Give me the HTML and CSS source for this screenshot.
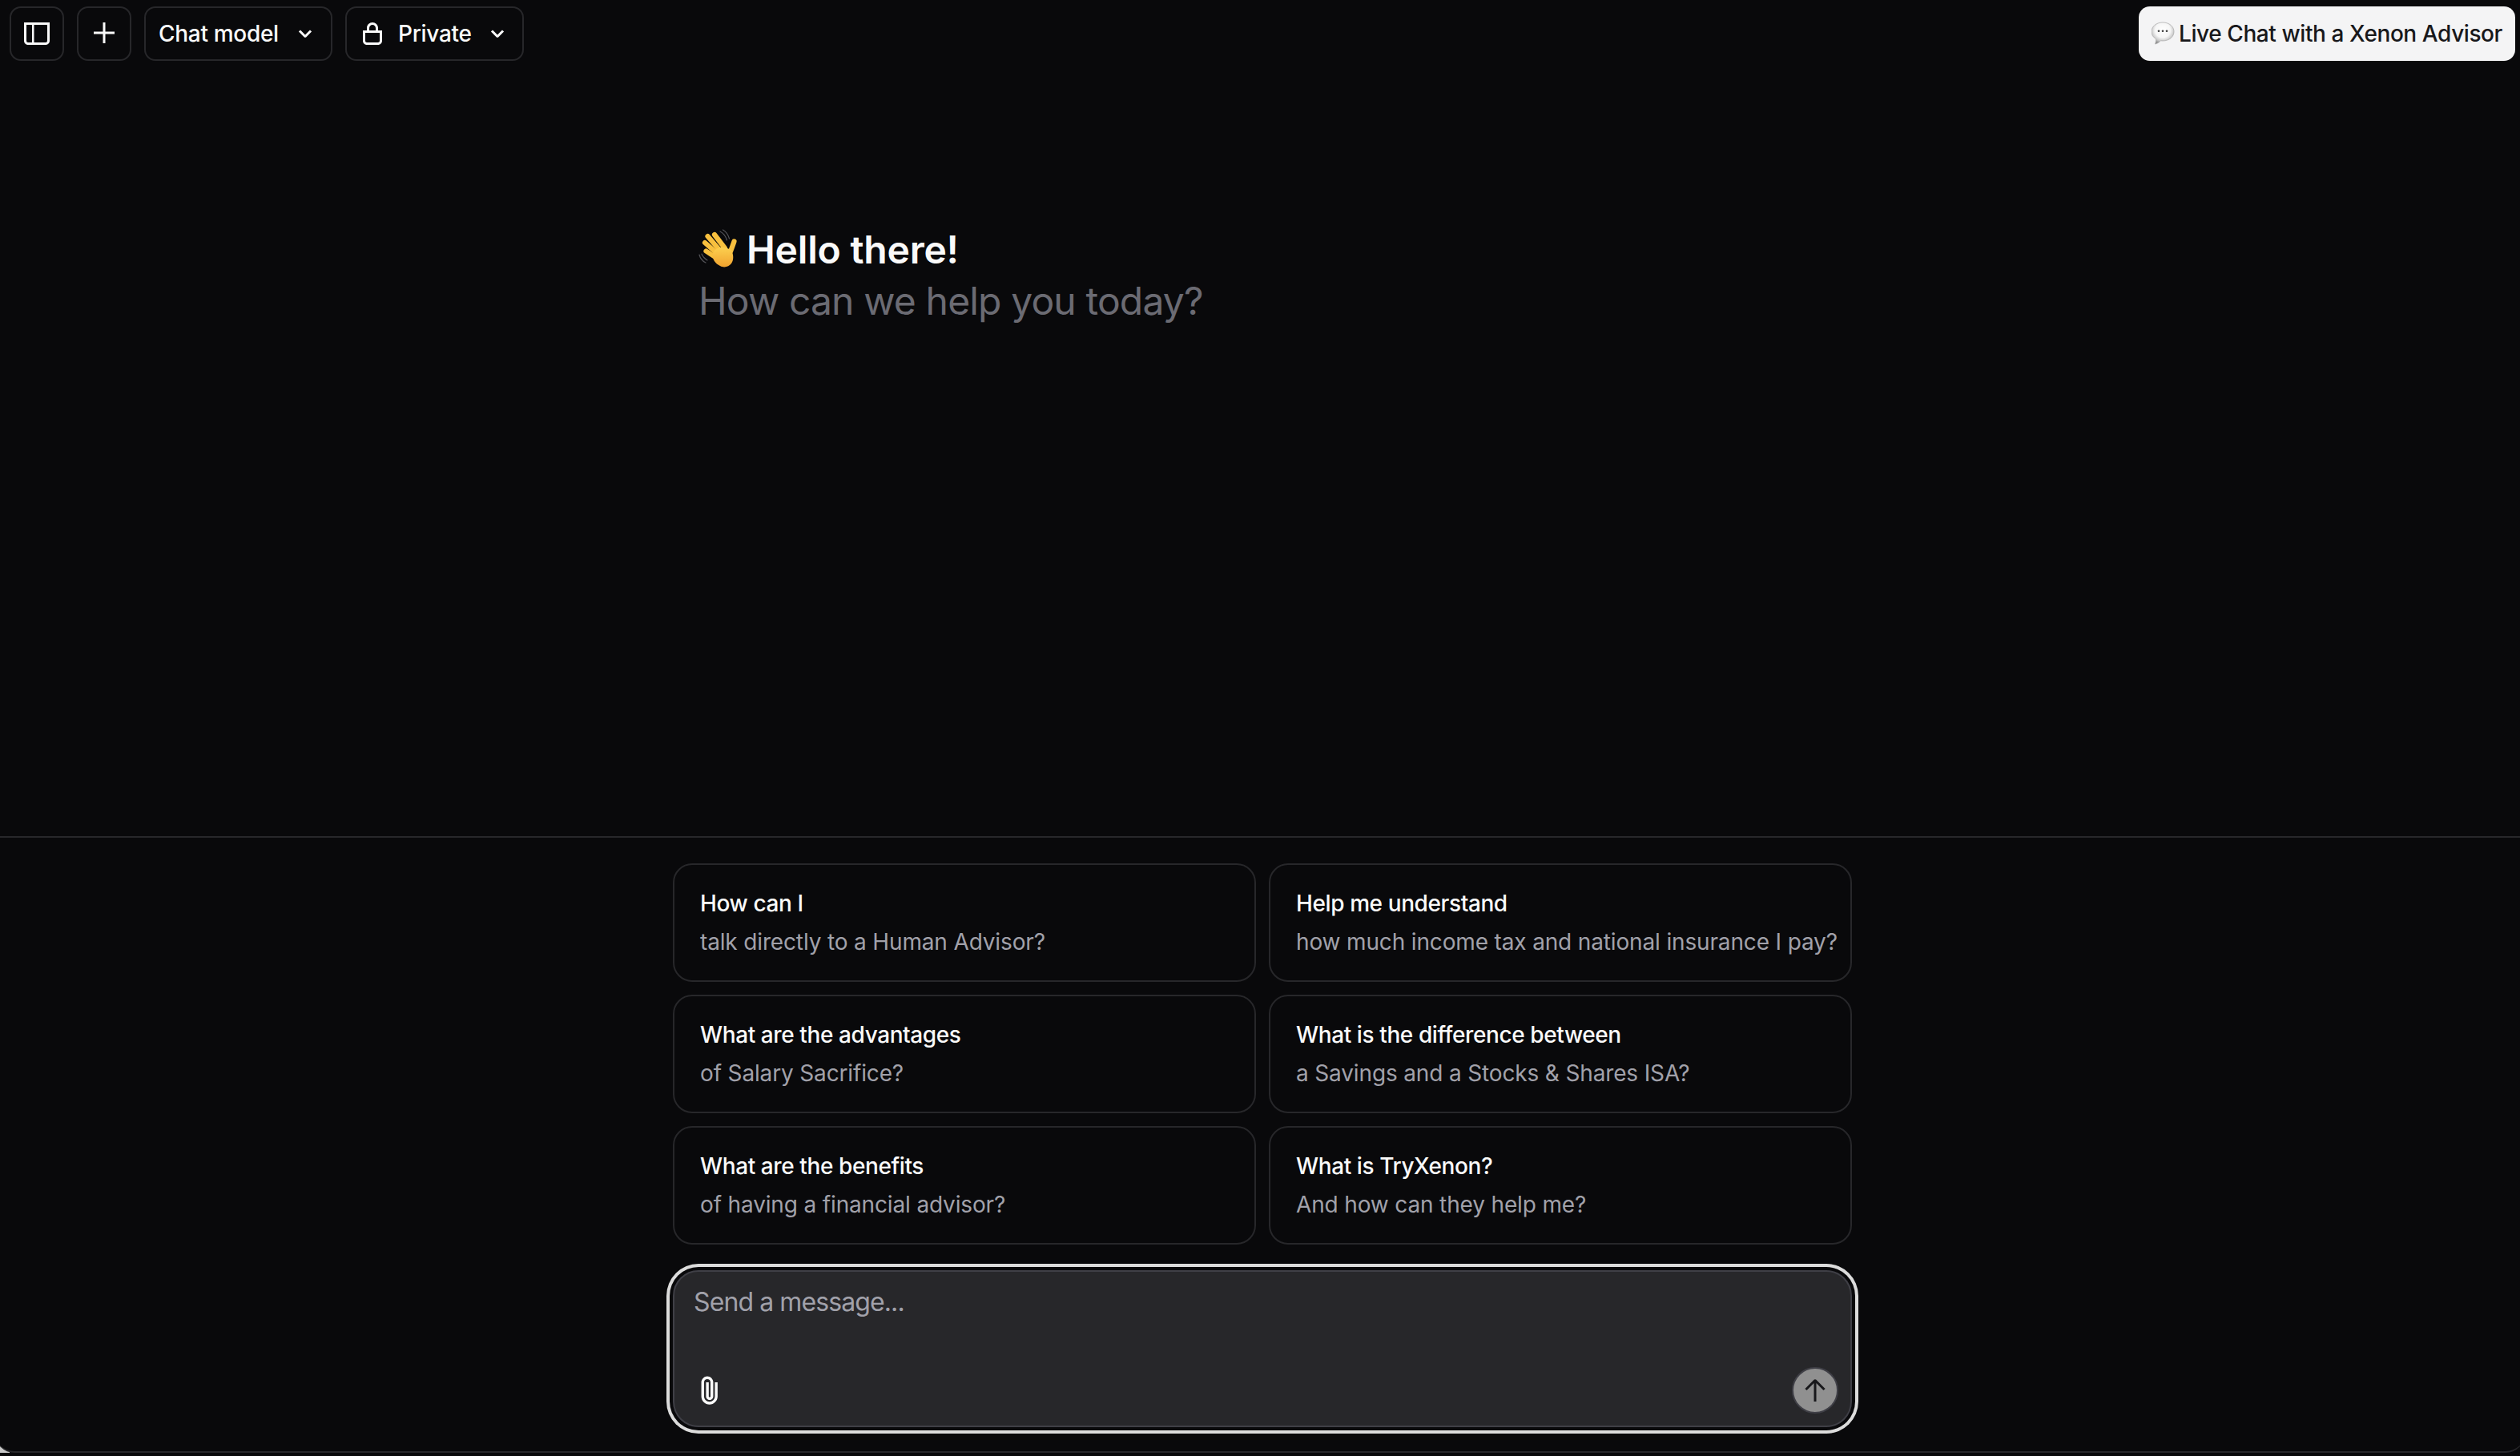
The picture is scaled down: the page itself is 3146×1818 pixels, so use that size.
FILE: index.html
```html
<!DOCTYPE html>
<html lang="en">
<head>
<meta charset="utf-8">
<title>Chat</title>
<link rel="stylesheet" href="styles.css">
</head>
<body>
<div class="corner"></div>
<div class="frame">
  <header class="topbar">
    <button class="btn btn-icon" type="button" aria-label="Toggle sidebar">
      <svg class="ico" viewBox="0 0 16 16"><path fill-rule="evenodd" clip-rule="evenodd" d="M6.245 2.5H14.5V12.5C14.5 13.0523 14.0523 13.5 13.5 13.5H6.245V2.5ZM4.995 2.5H1.5V12.5C1.5 13.0523 1.94772 13.5 2.5 13.5H4.995V2.5ZM0 1H1.5H14.5H16V2.5V12.5C16 13.8807 14.8807 15 13.5 15H2.5C1.11929 15 0 13.8807 0 12.5V2.5V1Z"/></svg>
    </button>
    <button class="btn btn-icon" type="button" aria-label="New chat">
      <svg class="ico" viewBox="0 0 16 16"><path fill-rule="evenodd" clip-rule="evenodd" d="M8.75 1.75V1H7.25V1.75V6.75H2.25H1.5V8.25H2.25H7.25V13.25V14H8.75V13.25V8.25H13.75H14.5V6.75H13.75H8.75V1.75Z"/></svg>
    </button>
    <button class="btn btn-model" type="button">
      <span>Chat model</span>
      <svg class="ico" viewBox="0 0 16 16"><path fill-rule="evenodd" clip-rule="evenodd" d="M12.0607 6.74999L11.5303 7.28032L8.7071 10.1035C8.31657 10.4941 7.68341 10.4941 7.29288 10.1035L4.46966 7.28032L3.93933 6.74999L4.99999 5.68933L5.53032 6.21966L7.99999 8.68933L10.4697 6.21966L11 5.68933L12.0607 6.74999Z"/></svg>
    </button>
    <button class="btn btn-private" type="button">
      <svg class="ico" viewBox="0 0 16 16"><path fill-rule="evenodd" clip-rule="evenodd" d="M10 4.5V6H6V4.5C6 3.39543 6.89543 2.5 8 2.5C9.10457 2.5 10 3.39543 10 4.5ZM4.5 6V4.5C4.5 2.567 6.067 1 8 1C9.933 1 11.5 2.567 11.5 4.5V6H12.5H14V7.5V12.5C14 13.8807 12.8807 15 11.5 15H4.5C3.11929 15 2 13.8807 2 12.5V7.5V6H3.5H4.5ZM11.5 7.5H10H6H4.5H3.5V12.5C3.5 13.0523 3.94772 13.5 4.5 13.5H11.5C12.0523 13.5 12.5 13.0523 12.5 12.5V7.5H11.5Z"/></svg>
      <span>Private</span>
      <svg class="ico" viewBox="0 0 16 16"><path fill-rule="evenodd" clip-rule="evenodd" d="M12.0607 6.74999L11.5303 7.28032L8.7071 10.1035C8.31657 10.4941 7.68341 10.4941 7.29288 10.1035L4.46966 7.28032L3.93933 6.74999L4.99999 5.68933L5.53032 6.21966L7.99999 8.68933L10.4697 6.21966L11 5.68933L12.0607 6.74999Z"/></svg>
    </button>
    <button class="btn-live" type="button">
      <svg class="bubble" viewBox="10 2 34 40">
        <defs><radialGradient id="bg" cx="50%" cy="36%" r="62%"><stop offset="0" stop-color="#ffffff"/><stop offset=".55" stop-color="#f6f6f6"/><stop offset=".82" stop-color="#c8c8c8"/><stop offset="1" stop-color="#8e8e8e"/></radialGradient></defs>
        <path fill="url(#bg)" stroke="#a8a8a8" stroke-width=".7" d="M24 8C16 8 10 13 10 19.500C10 23.500 12 26.500 15.500 28.500C15.800 30.500 15.200 33 14.500 35C17.500 34.500 20 32.500 21.500 30.800C22.300 30.900 23.200 31 24 31C32 31 38 26 38 19.500C38 13 32 8 24 8Z"/>
        <circle cx="19" cy="18.800" r="1.300" fill="#3a3a3a"/><circle cx="24" cy="18.800" r="1.300" fill="#3a3a3a"/><circle cx="29" cy="18.800" r="1.300" fill="#3a3a3a"/>
      </svg>
      <span>Live Chat with a Xenon Advisor</span>
    </button>
  </header>

  <main class="messages">
    <div class="greeting">
      <div class="hello">
        <svg class="wave" viewBox="6 0 60 64">
          <defs><linearGradient id="hand" x1="0" y1="0" x2="0" y2="1"><stop offset="0" stop-color="#fcd050"/><stop offset="1" stop-color="#f0a22e"/></linearGradient></defs>
          <g fill="none" stroke="#55555a" stroke-width="1.200" stroke-linecap="round"><path d="M33 9C37 11 40 15 41.500 20"/><path d="M36.500 7C40 9 43 13 44.500 18"/><path d="M7 38C8 42 11 46 15 48"/><path d="M10 37C11 40 14 43 17 45"/></g>
          <g fill="none" stroke="#f8c03e" stroke-width="6.200" stroke-linecap="round"><path d="M26 13L39 30"/><path d="M17.500 15L33 33"/><path d="M14 23L30 37"/><path d="M15.500 33.500L30 43"/><path d="M50.500 21.500C49 26 47.500 30 46 34"/></g>
          <path fill="url(#hand)" d="M30 30C36 27 42 30 47 32C50 38 50 45 47 49C44 53 38 55 33 52C27 49 23 44 24 37C25 33 27 31 30 30Z"/>
        </svg>
        <span>Hello there!</span>
      </div>
      <div class="subhello">How can we help you today?</div>
    </div>
  </main>

  <footer class="composer">
    <div class="suggestions">
      <button class="card" type="button"><span class="card-title">How can I</span><span class="card-sub">talk directly to a Human Advisor?</span></button>
      <button class="card" type="button"><span class="card-title">Help me understand</span><span class="card-sub">how much income tax and national insurance I pay?</span></button>
      <button class="card" type="button"><span class="card-title">What are the advantages</span><span class="card-sub">of Salary Sacrifice?</span></button>
      <button class="card" type="button"><span class="card-title">What is the difference between</span><span class="card-sub">a Savings and a Stocks &amp; Shares ISA?</span></button>
      <button class="card" type="button"><span class="card-title">What are the benefits</span><span class="card-sub">of having a financial advisor?</span></button>
      <button class="card" type="button"><span class="card-title">What is TryXenon?</span><span class="card-sub">And how can they help me?</span></button>
    </div>
    <div class="input-box">
      <textarea class="input" placeholder="Send a message..." rows="2"></textarea>
      <button class="attach" type="button" aria-label="Attach file">
        <svg class="clip" viewBox="0 0 16 16"><path fill-rule="evenodd" clip-rule="evenodd" d="M10.8591 1.70735C10.3257 1.70735 9.81417 1.91925 9.437 2.29643L3.19455 8.53886C2.56246 9.17095 2.20735 10.0282 2.20735 10.9222C2.20735 11.8161 2.56246 12.6734 3.19455 13.3055C3.82665 13.9376 4.68395 14.2927 5.57786 14.2927C6.47178 14.2927 7.32908 13.9376 7.96117 13.3055L14.2036 7.06304L15.4107 8.27018L9.16829 14.5126C8.21602 15.4649 6.92447 16 5.57786 16C4.23126 16 2.93971 15.4649 1.98744 14.5126C1.03517 13.5603 0.5 12.2688 0.5 10.9222C0.5 9.57558 1.03517 8.28403 1.98744 7.33176L8.22987 1.08933C8.9272 0.392 9.87298 0 10.8591 0C11.8453 0 12.7911 0.392 13.4884 1.08933C14.1857 1.78666 14.5777 2.73244 14.5777 3.71859C14.5777 4.70474 14.1857 5.65052 13.4884 6.34785L7.23914 12.5903C6.8174 13.012 6.24541 13.2489 5.64896 13.2489C5.05251 13.2489 4.48052 13.012 4.05878 12.5903C3.63704 12.1685 3.40011 11.5965 3.40011 11.0001C3.40011 10.4036 3.63704 9.83163 4.05878 9.40989L10.2484 3.22033L11.4555 4.42747L5.26592 10.6171C5.16432 10.7187 5.10724 10.8564 5.10724 11.0001C5.10724 11.1438 5.16432 11.2816 5.26592 11.3832C5.36752 11.4848 5.50532 11.5418 5.64896 11.5418C5.7926 11.5418 5.9304 11.4848 6.032 11.3832L12.2812 5.14071C12.6584 4.76353 12.8703 4.25197 12.8703 3.71859C12.8703 3.18521 12.6584 2.67365 12.2812 2.29643C11.904 1.91925 11.3925 1.70735 10.8591 1.70735Z"/></svg>
      </button>
      <button class="send" type="button" aria-label="Send">
        <svg class="ico" viewBox="0 0 16 16"><path fill-rule="evenodd" clip-rule="evenodd" d="M8.70711 1.39644C8.31659 1.00592 7.68342 1.00592 7.2929 1.39644L2.21968 6.46966L1.68935 6.99999L2.75001 8.06065L3.28034 7.53032L7.25001 3.56065V14.25V15H8.75001V14.25V3.56065L12.7197 7.53032L13.25 8.06065L14.3107 6.99999L13.7803 6.46966L8.70711 1.39644Z"/></svg>
      </button>
    </div>
  </footer>
</div>
</body>
</html>
```

FILE: styles.css
```css
* { box-sizing: border-box; }

html, body {
  margin: 0;
  height: 100%;
  overflow: hidden;
  background: #09090b;
  font-family: Inter, "Liberation Sans", sans-serif;
  color: #fafafa;
}

body { position: relative; }

.corner {
  position: absolute;
  left: 0;
  bottom: 4px;
  width: 12px;
  height: 18px;
  background: #c9c9c9;
}

.frame {
  position: relative;
  margin: 0 -6px;
  padding-left: 6px;
  height: 1814px;
  display: flex;
  flex-direction: column;
  background: #09090b;
  border-bottom: 2px solid #27272a;
  border-radius: 0 0 24px 24px;
}

button {
  font-family: inherit;
  padding: 0;
  margin: 0;
  cursor: pointer;
}

.topbar {
  display: flex;
  align-items: center;
  gap: 16px;
  padding: 8px 12px 0;
}

.ico {
  width: 32px;
  height: 32px;
  fill: currentColor;
  flex: none;
}

.btn {
  height: 68px;
  display: flex;
  align-items: center;
  background: #09090b;
  color: #fafafa;
  border: 2px solid #27272a;
  border-radius: 14px;
  font-size: 28px;
  font-weight: 500;
  letter-spacing: -0.3px;
  white-space: nowrap;
}

.btn-icon {
  width: 68px;
  justify-content: center;
}

.btn-model {
  width: 235px;
  padding-left: 16px;
  gap: 17px;
}

.btn-private {
  width: 223px;
  padding-left: 16px;
  gap: 16px;
}

.btn-live {
  margin-left: auto;
  height: 68px;
  display: flex;
  align-items: center;
  background: #f4f4f5;
  color: #18181b;
  border: 0;
  border-radius: 14px;
  padding: 0 16px;
  font-size: 28px;
  font-weight: 500;
  letter-spacing: -0.42px;
  white-space: nowrap;
}

.bubble {
  width: 34px;
  height: 40px;
  flex: none;
}

.messages {
  flex: 1;
  min-height: 0;
  border-bottom: 2px solid #27272a;
}

.greeting {
  margin: 204px 0 0 872px;
}

.hello {
  display: flex;
  align-items: center;
  height: 64px;
  font-size: 48px;
  line-height: 64px;
  font-weight: 600;
  letter-spacing: -0.2px;
}

.wave {
  width: 60px;
  height: 64px;
  flex: none;
}

.subhello {
  font-size: 48px;
  line-height: 64px;
  letter-spacing: -0.85px;
  color: #6b6b73;
}

.composer {
  width: 1472px;
  margin-left: 840px;
  padding: 32px 0 30px;
  display: flex;
  flex-direction: column;
  gap: 32px;
}

.suggestions {
  display: grid;
  grid-template-columns: 1fr 1fr;
  gap: 16px;
}

.card {
  height: 148px;
  display: flex;
  flex-direction: column;
  align-items: flex-start;
  justify-content: center;
  gap: 8px;
  padding: 0 0 0 32px;
  background: #09090b;
  border: 2px solid #27272a;
  border-radius: 24px;
  font-size: 28px;
  line-height: 40px;
  white-space: nowrap;
}

.card-title {
  color: #fafafa;
  font-weight: 500;
  letter-spacing: -0.4px;
}

.card-sub {
  color: #a1a1aa;
  font-weight: 400;
  letter-spacing: -0.15px;
}

.input-box {
  position: relative;
  height: 196px;
  background: #27272a;
  border: 2px solid #3f3f46;
  border-radius: 32px;
  box-shadow: 0 0 0 4px #09090b, 0 0 0 8px #dcdcdc;
}

.input {
  display: block;
  width: 100%;
  height: 100%;
  padding: 14px 24px;
  background: transparent;
  border: 0;
  outline: 0;
  resize: none;
  color: #fafafa;
  font-family: inherit;
  font-size: 32px;
  line-height: 48px;
  letter-spacing: -0.9px;
}

.input::placeholder {
  color: #a1a1aa;
  opacity: 1;
}

.attach {
  position: absolute;
  left: 23px;
  bottom: 20px;
  width: 40px;
  height: 48px;
  display: flex;
  align-items: center;
  justify-content: center;
  background: transparent;
  border: 0;
  color: #fafafa;
}

.clip {
  width: 32px;
  height: 32px;
  fill: currentColor;
  transform: rotate(-45deg);
}

.send {
  position: absolute;
  right: 15px;
  bottom: 15px;
  width: 58px;
  height: 58px;
  display: flex;
  align-items: center;
  justify-content: center;
  background: #909090;
  border: 2px solid #3f3f46;
  border-radius: 50%;
  color: #18181b;
}
```
